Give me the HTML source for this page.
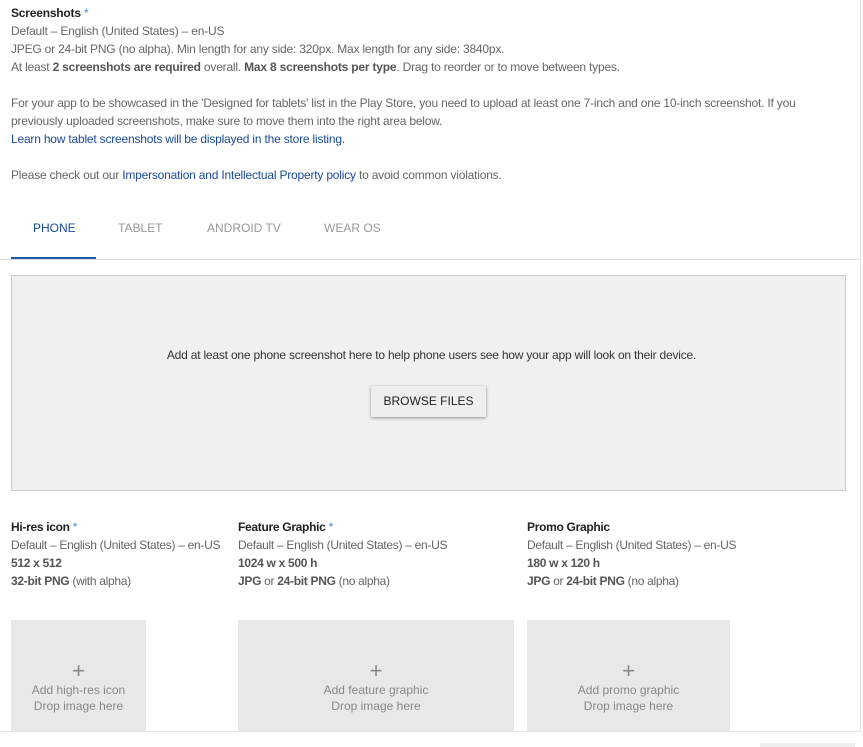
<!DOCTYPE html>
<html><head><style>
body{margin:0;width:863px;height:747px;background:#fff;font-family:"Liberation Sans",sans-serif;font-size:12px;color:#666;position:relative;overflow:hidden}
.a{position:absolute;white-space:nowrap;line-height:18px}
b{color:#555}
.t{color:#222;font-weight:bold}
.s{color:#4285f4;font-weight:normal}
a{color:#1a4a9a;text-decoration:none}
.tab{position:absolute;top:221px;font-size:12px;color:#999}
.box{position:absolute;top:620px;height:111px;background:#e8e8e8;text-align:center;color:#888;font-size:12px;line-height:16px}
.box .p{font-size:22px;line-height:22px;margin-top:40px;color:#888}
</style></head><body>
<div style="position:absolute;left:860px;top:0;width:1px;height:731px;background:#ddd"></div>
<div style="position:absolute;left:0;top:731px;width:861px;height:1px;background:#e4e4e4"></div>
<div style="position:absolute;left:760px;top:743px;width:95px;height:4px;background:#eee"></div>
<div class="a" style="left:11px;top:4px;letter-spacing:-0.2px">
<span class="t">Screenshots</span> <span class="s">*</span><br>
Default – English (United States) – en-US<br>
JPEG or 24-bit PNG (no alpha). Min length for any side: 320px. Max length for any side: 3840px.<br>
At least <b>2 screenshots are required</b> overall. <b>Max 8 screenshots per type</b>. Drag to reorder or to move between types.<br><br>
For your app to be showcased in the 'Designed for tablets' list in the Play Store, you need to upload at least one 7-inch and one 10-inch screenshot. If you<br>
previously uploaded screenshots, make sure to move them into the right area below.<br>
<a>Learn how tablet screenshots will be displayed in the store listing.</a><br><br>
Please check out our <a>Impersonation and Intellectual Property policy</a> to avoid common violations.
</div>
<div class="tab" style="left:33px;color:#1a4a9a">PHONE</div>
<div class="tab" style="left:118px">TABLET</div>
<div class="tab" style="left:207px">ANDROID TV</div>
<div class="tab" style="left:324px">WEAR OS</div>
<div style="position:absolute;left:11px;top:257px;width:85px;height:3px;background:#1a5aaa"></div>
<div style="position:absolute;left:0;top:259px;width:860px;height:1px;background:#ddd"></div>
<div style="position:absolute;left:11px;top:275px;width:833px;height:214px;background:#f0f0f0;border:1px solid #ccc"></div>
<div class="a" style="left:0;width:863px;text-align:center;top:346px;color:#333;letter-spacing:-0.2px">Add at least one phone screenshot here to help phone users see how your app will look on their device.</div>
<div style="position:absolute;left:371px;top:386px;width:115px;height:31px;background:#eee;box-shadow:0 1px 3px rgba(0,0,0,.4);text-align:center;line-height:31px;color:#222;font-size:12px">BROWSE FILES</div>
<div class="a" style="left:11px;top:518px;letter-spacing:-0.3px"><span class="t">Hi-res icon</span> <span class="s">*</span><br>Default – English (United States) – en-US<br><b>512 x 512</b><br><b>32-bit PNG</b> (with alpha)</div>
<div class="a" style="left:238px;top:518px;letter-spacing:-0.3px"><span class="t">Feature Graphic</span> <span class="s">*</span><br>Default – English (United States) – en-US<br><b>1024 w x 500 h</b><br><b>JPG</b> or <b>24-bit PNG</b> (no alpha)</div>
<div class="a" style="left:527px;top:518px;letter-spacing:-0.3px"><span class="t">Promo Graphic</span><br>Default – English (United States) – en-US<br><b>180 w x 120 h</b><br><b>JPG</b> or <b>24-bit PNG</b> (no alpha)</div>
<div class="box" style="left:11px;width:135px"><div class="p">+</div>Add high-res icon<br>Drop image here</div>
<div class="box" style="left:238px;width:276px"><div class="p">+</div>Add feature graphic<br>Drop image here</div>
<div class="box" style="left:527px;width:203px"><div class="p">+</div>Add promo graphic<br>Drop image here</div>
</body></html>
